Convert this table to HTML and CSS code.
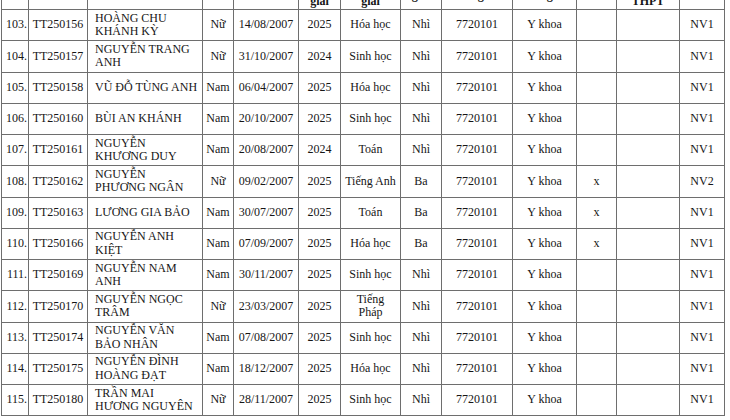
FILE: index.html
```html
<!DOCTYPE html>
<html lang="vi">
<head>
<meta charset="utf-8">
<title>Danh sách</title>
<link rel="stylesheet" href="styles.css">
</head>
<body>
<div class="sheet">
<table class="list">
<colgroup>
<col class="c-stt"><col class="c-ma"><col class="c-ten"><col class="c-gt"><col class="c-ns"><col class="c-nam"><col class="c-mon"><col class="c-giai"><col class="c-mn"><col class="c-tn"><col class="c-x"><col class="c-thpt"><col class="c-nv">
</colgroup>
<thead>
<tr class="hd">
<th>STT</th><th>Mã hồ sơ</th><th>Họ và tên</th><th>Giới tính</th><th>Ngày sinh</th>
<th class="hb">Năm đạt giải</th><th class="hb">Môn đạt giải</th><th class="hm">Loại giải</th><th class="hm">Mã ngành</th><th class="hm">Tên ngành</th><th>Ghi chú</th><th class="hb">Điểm TN THPT</th><th>Nguyện vọng</th>
</tr>
</thead>
<tbody>
<tr class="r"><td class="stt">103.</td><td>TT250156</td><td class="name">HOÀNG CHU KHÁNH KỲ</td><td>Nữ</td><td>14/08/2007</td><td>2025</td><td>Hóa học</td><td>Nhì</td><td>7720101</td><td>Y khoa</td><td></td><td></td><td>NV1</td></tr>
<tr class="r"><td class="stt">104.</td><td>TT250157</td><td class="name">NGUYỄN TRANG ANH</td><td>Nữ</td><td>31/10/2007</td><td>2024</td><td>Sinh học</td><td>Nhì</td><td>7720101</td><td>Y khoa</td><td></td><td></td><td>NV1</td></tr>
<tr class="r"><td class="stt">105.</td><td>TT250158</td><td class="name">VŨ ĐỖ TÙNG ANH</td><td>Nam</td><td>06/04/2007</td><td>2025</td><td>Hóa học</td><td>Nhì</td><td>7720101</td><td>Y khoa</td><td></td><td></td><td>NV1</td></tr>
<tr class="r"><td class="stt">106.</td><td>TT250160</td><td class="name">BÙI AN KHÁNH</td><td>Nam</td><td>20/10/2007</td><td>2025</td><td>Sinh học</td><td>Nhì</td><td>7720101</td><td>Y khoa</td><td></td><td></td><td>NV1</td></tr>
<tr class="r"><td class="stt">107.</td><td>TT250161</td><td class="name">NGUYỄN KHƯƠNG DUY</td><td>Nam</td><td>20/08/2007</td><td>2024</td><td>Toán</td><td>Nhì</td><td>7720101</td><td>Y khoa</td><td></td><td></td><td>NV1</td></tr>
<tr class="r"><td class="stt">108.</td><td>TT250162</td><td class="name">NGUYỄN PHƯƠNG NGÂN</td><td>Nữ</td><td>09/02/2007</td><td>2025</td><td>Tiếng Anh</td><td>Ba</td><td>7720101</td><td>Y khoa</td><td>x</td><td></td><td>NV2</td></tr>
<tr class="r"><td class="stt">109.</td><td>TT250163</td><td class="name">LƯƠNG GIA BẢO</td><td>Nam</td><td>30/07/2007</td><td>2025</td><td>Toán</td><td>Ba</td><td>7720101</td><td>Y khoa</td><td>x</td><td></td><td>NV1</td></tr>
<tr class="r"><td class="stt">110.</td><td>TT250166</td><td class="name">NGUYỄN ANH KIỆT</td><td>Nam</td><td>07/09/2007</td><td>2025</td><td>Hóa học</td><td>Ba</td><td>7720101</td><td>Y khoa</td><td>x</td><td></td><td>NV1</td></tr>
<tr class="r"><td class="stt">111.</td><td>TT250169</td><td class="name">NGUYỄN NAM ANH</td><td>Nam</td><td>30/11/2007</td><td>2025</td><td>Sinh học</td><td>Nhì</td><td>7720101</td><td>Y khoa</td><td></td><td></td><td>NV1</td></tr>
<tr class="r"><td class="stt">112.</td><td>TT250170</td><td class="name">NGUYỄN NGỌC TRÂM</td><td>Nữ</td><td>23/03/2007</td><td>2025</td><td>Tiếng Pháp</td><td>Nhì</td><td>7720101</td><td>Y khoa</td><td></td><td></td><td>NV1</td></tr>
<tr class="r"><td class="stt">113.</td><td>TT250174</td><td class="name">NGUYỄN VĂN BẢO NHÂN</td><td>Nam</td><td>07/08/2007</td><td>2025</td><td>Sinh học</td><td>Nhì</td><td>7720101</td><td>Y khoa</td><td></td><td></td><td>NV1</td></tr>
<tr class="r"><td class="stt">114.</td><td>TT250175</td><td class="name">NGUYỄN ĐÌNH HOÀNG ĐẠT</td><td>Nam</td><td>18/12/2007</td><td>2025</td><td>Hóa học</td><td>Nhì</td><td>7720101</td><td>Y khoa</td><td></td><td></td><td>NV1</td></tr>
<tr class="r"><td class="stt">115.</td><td>TT250180</td><td class="name">TRẦN MAI HƯƠNG NGUYÊN</td><td>Nữ</td><td>28/11/2007</td><td>2025</td><td>Sinh học</td><td>Nhì</td><td>7720101</td><td>Y khoa</td><td></td><td></td><td>NV1</td></tr>
</tbody>
</table>
</div>
</body>
</html>
```
FILE: styles.css
```css
html, body {
  margin: 0;
  padding: 0;
  background: #ffffff;
}

.sheet {
  height: 420px;
  overflow: hidden;
  padding-left: 1px;
}

.list {
  border-collapse: collapse;
  table-layout: fixed;
  width: 724px;
  margin-top: -51px;
  font-family: "Liberation Serif", "Times New Roman", serif;
  font-size: 12px;
  line-height: 13.5px;
  color: #161616;
}

.list th,
.list td {
  border: 1px solid #6e6e6e;
  padding: 0 3px;
  text-align: center;
  vertical-align: middle;
  overflow: hidden;
}

.c-stt { width: 27px; }
.c-ma { width: 59px; }
.c-ten { width: 115px; }
.c-gt { width: 31px; }
.c-ns { width: 65px; }
.c-nam { width: 42px; }
.c-mon { width: 60px; }
.c-giai { width: 41px; }
.c-mn { width: 71px; }
.c-tn { width: 64px; }
.c-x { width: 40px; }
.c-thpt { width: 63px; }
.c-nv { width: 45px; }

.hd {
  height: 60px;
}

.hd th {
  font-weight: bold;
}

.hd th.hb {
  vertical-align: bottom;
  padding-bottom: 1px;
}

.hd th.hm {
  vertical-align: bottom;
  padding-bottom: 7px;
}

.r {
  height: 31.25px;
}

.list td.stt {
  text-align: right;
  padding: 0 1px 0 0;
}

.list td.name {
  text-align: left;
  padding: 0 4px 0 7px;
}
```
